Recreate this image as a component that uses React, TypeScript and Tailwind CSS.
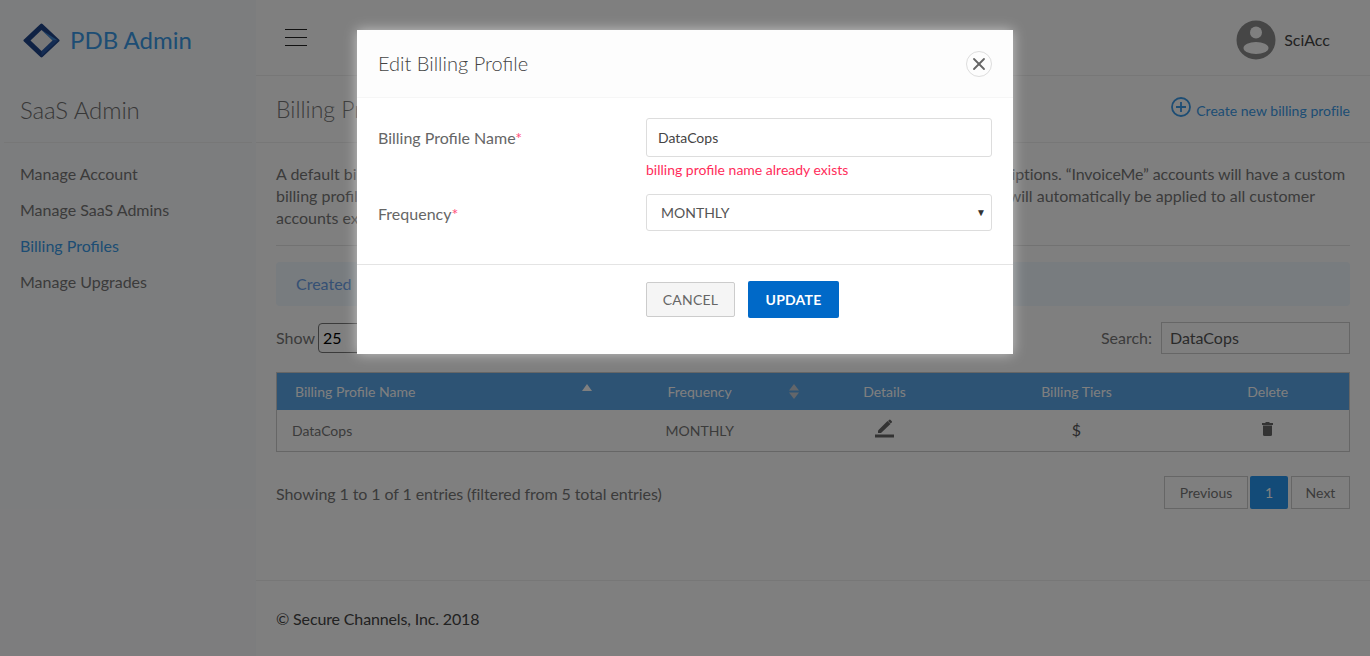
import React from 'react';
import { X, ChevronDown } from 'lucide-react';

const navItems = ['Manage Account', 'Manage SaaS Admins', 'Billing Profiles', 'Manage Upgrades'];

const Logo = () => (
    <svg width="37" height="35" viewBox="0 0 37 35">
        <path d="M18.5 2 L35 17.5 L18.5 33 L2 17.5 Z" fill="#1f4488" stroke="#1f4488" strokeWidth="3" strokeLinejoin="round" />
        <path d="M18.5 7 L35 17.5 L29.5 17.5 Z" fill="#3f86d0" />
        <path d="M35 17.5 L18.5 33 L18.5 28 L29.5 17.5 Z" fill="#2a5aa8" />
        <path d="M18.5 7 L29.5 17.5 L18.5 28 L7.5 17.5 Z" fill="#f0f0f0" />
    </svg>
);

const Avatar = () => (
    <svg width="40" height="40" viewBox="0 0 40 40">
        <circle cx="20" cy="20" r="19.5" fill="#8c8c8c" />
        <circle cx="20" cy="12.5" r="6" fill="#ffffff" />
        <ellipse cx="20" cy="28" rx="12.5" ry="6" fill="#ffffff" />
    </svg>
);

const PlusCircle = () => (
    <svg width="20" height="20" viewBox="0 0 20 20" fill="none" stroke="#3a9ae8" strokeWidth="1.8">
        <circle cx="10" cy="10" r="9" />
        <path d="M10 5v10M5 10h10" />
    </svg>
);

const SortArrows = () => (
    <svg width="10" height="15" viewBox="0 0 10 15" fill="#c6cdd4">
        <path d="M5 0 L10 6.5 H0 Z" />
        <path d="M5 15 L0 8.5 H10 Z" />
    </svg>
);

const EditIcon = () => (
    <svg width="19" height="19" viewBox="0 0 19 19" fill="#666666">
        <path d="M3 12.5 L12.5 3 L15.5 6 L6 15 L3 15 Z" transform="translate(0 -1)" />
        <path d="M13.5 2 L14.8 0.7 Q15.3 0.3 15.8 0.7 L17.3 2.2 Q17.7 2.7 17.3 3.2 L16 4.5 Z" transform="translate(-0.5 0)" />
        <rect x="0" y="15.5" width="19" height="3" />
    </svg>
);

const TrashIcon = () => (
    <svg width="11" height="14" viewBox="0 0 11 14" fill="#666666">
        <path d="M3.5 0 H7.5 V1 H11 V3 H0 V1 H3.5 Z" />
        <path d="M1 3.5 H10 V12.5 Q10 14 8.5 14 H2.5 Q1 14 1 12.5 Z" />
    </svg>
);

const App: React.FC = () => {
    return (
        <div className="relative h-[656px] w-[1370px] overflow-hidden bg-white text-[16px] text-[#777777] font-['Lato',sans-serif]">
            <div className="flex h-full">
                {/* Sidebar */}
                <aside className="h-full w-[256px] shrink-0 bg-[#f9fafc]">
                    <div className="flex h-[76px] items-center gap-[10px] pl-[23px] pt-[4px]">
                        <Logo />
                        <span className="text-[24px] text-[#3a9ae8]">PDB Admin</span>
                    </div>
                    <div className="ml-[4px] mr-[4px] flex h-[67px] items-center border-b border-[#eeeeee] pl-[16px] pt-[2px]">
                        <span className="text-[24px] font-light tracking-[-0.1px] text-[#707070]">SaaS Admin</span>
                    </div>
                    <nav className="flex flex-col gap-[14px] pl-[20px] pt-[20px]">
                        {navItems.map((item) => (
                            <a key={item} className={`h-[22px] leading-[22px] ${item === 'Billing Profiles' ? 'text-[#3a9ae8]' : 'text-[#777777]'}`}>
                                {item}
                            </a>
                        ))}
                    </nav>
                </aside>

                {/* Main */}
                <main className="flex h-full min-w-0 flex-1 flex-col">
                    <header className="flex h-[76px] shrink-0 items-center justify-between border-b border-[#eeeeee] pl-[29px] pr-[40px]">
                        <div className="flex w-[22px] flex-col gap-[7px]">
                            <span className="h-px w-full bg-[#222222]" />
                            <span className="h-px w-full bg-[#222222]" />
                            <span className="h-px w-full bg-[#222222]" />
                        </div>
                        <div className="mt-[4px] flex items-center gap-[8px]">
                            <Avatar />
                            <span className="text-[16px] text-[#444444]">SciAcc</span>
                        </div>
                    </header>

                    <div className="flex flex-1 flex-col pl-[20px] pr-[20px]">
                        <div className="-ml-[20px] -mr-[20px] flex h-[67px] shrink-0 items-center justify-between border-b border-[#eeeeee] pl-[20px] pr-[20px]">
                            <h1 className="text-[23px] font-light text-[#777777]">Billing Profiles</h1>
                            <a className="flex items-center gap-[5px] pt-[2px] text-[14px] tracking-[0.03px] text-[#3a9ae8]">
                                <span className="mb-[6px]"><PlusCircle /></span>
                                Create new billing profile
                            </a>
                        </div>

                        <div className="flex h-[103px] shrink-0 flex-col border-b border-[#e4e4e4] pt-[20px] leading-[22px]">
                            <div className="flex justify-between">
                                <span>A default billing profile is used for</span>
                                <span className="mr-[5px] tracking-[-0.1px]">subscriptions. “InvoiceMe” accounts will have a custom</span>
                            </div>
                            <div className="flex justify-between">
                                <span>billing profile assigned to them.</span>
                                <span className="mr-[35px]">will automatically be applied to all customer</span>
                            </div>
                            <div>accounts except those with a custom profile.</div>
                        </div>

                        <div className="mt-[16px] flex h-[44px] shrink-0 items-center rounded bg-[#f0f8ff] pl-[20px] text-[#6aa0e8]">
                            Created
                        </div>

                        <div className="mt-[16px] flex h-[32px] shrink-0 items-center justify-between">
                            <div className="flex items-center gap-[3px]">
                                Show
                                <div className="flex h-[30px] w-[70px] items-center justify-between rounded-[4px] border border-[#777777] px-[4px] text-black">
                                    25
                                    <ChevronDown size={12} />
                                </div>
                            </div>
                            <div className="flex items-center gap-[9px]">
                                Search:
                                <div className="flex h-[32px] w-[189px] items-center border border-[#cccccc] pl-[8px] text-[#555555]">DataCops</div>
                            </div>
                        </div>

                        <table className="mt-[18px] w-[1073px] table-fixed border border-[#cccccc] text-[14px]">
                            <colgroup>
                                <col className="w-[374px]" />
                                <col className="w-[152px]" />
                                <col className="w-[164px]" />
                                <col className="w-[220px]" />
                                <col className="w-[163px]" />
                            </colgroup>
                            <thead>
                                <tr className="h-[37px] bg-[#5aa6e8] font-normal text-white">
                                    <th className="pl-[18px] text-left font-normal">
                                        <div className="flex items-center justify-between pr-[59px]">
                                            Billing Profile Name
                                            <svg width="10" height="7" viewBox="0 0 10 7" fill="#ffffff" className="mb-[7px]"><path d="M5 0 L10 7 H0 Z" /></svg>
                                        </div>
                                    </th>
                                    <th className="pl-[17px] text-left font-normal">
                                        <div className="flex items-center justify-between pr-[4px]">
                                            Frequency
                                            <SortArrows />
                                        </div>
                                    </th>
                                    <th className="text-center font-normal">Details</th>
                                    <th className="text-center font-normal">Billing Tiers</th>
                                    <th className="text-center font-normal">Delete</th>
                                </tr>
                            </thead>
                            <tbody>
                                <tr className="h-[42px] text-[#777777]">
                                    <td className="pl-[15px]">DataCops</td>
                                    <td className="pl-[15px]">MONTHLY</td>
                                    <td>
                                        <div className="mb-[4px] flex justify-center"><EditIcon /></div>
                                    </td>
                                    <td className="text-center text-[16px] text-[#555555]">$</td>
                                    <td>
                                        <div className="mb-[3px] flex justify-center"><TrashIcon /></div>
                                    </td>
                                </tr>
                            </tbody>
                        </table>

                        <div className="mt-[24px] flex items-center justify-between">
                            <span className="mt-[2px] tracking-[-0.09px]">Showing 1 to 1 of 1 entries (filtered from 5 total entries)</span>
                            <div className="flex items-center gap-[2px] text-[14px]">
                                <button className="h-[33px] w-[84px] border border-[#cccccc]">Previous</button>
                                <button className="h-[33px] w-[38px] rounded-[2px] bg-[#2696f0] text-white">1</button>
                                <button className="ml-[1px] h-[33px] w-[59px] border border-[#cccccc]">Next</button>
                            </div>
                        </div>

                        <footer className="-ml-[20px] -mr-[20px] mt-auto flex h-[76px] shrink-0 items-center border-t border-[#eeeeee] pl-[20px] tracking-[-0.14px] text-[#444444]">
                            © Secure Channels, Inc. 2018
                        </footer>
                    </div>
                </main>
            </div>

            {/* Overlay and modal */}
            <div className="absolute inset-0 bg-black/50" />
            <div className="absolute left-[357px] top-[30px] flex h-[324px] w-[656px] flex-col bg-white text-[#666666] shadow-[0_0_12px_rgba(255,255,255,0.55)]">
                <div className="flex h-[68px] shrink-0 items-center justify-between border-b border-[#f6f6f6] bg-[#fdfdfd] pb-[2px] pl-[21px] pr-[21px]">
                    <span className="text-[20px] font-light text-[#444444]">Edit Billing Profile</span>
                    <span className="mt-[2px] flex h-[26px] w-[26px] items-center justify-center rounded-full border border-[#dddddd]">
                        <X size={20} strokeWidth={2.2} />
                    </span>
                </div>
                <div className="grid h-[167px] shrink-0 grid-cols-[268px_346px] content-start border-b border-[#e4e4e4] pl-[21px] pt-[20px] text-[16px]">
                    <label className="pt-[8px]">Billing Profile Name<span className="text-[#ff4f7b]">*</span></label>
                    <div className="flex flex-col">
                        <div className="flex h-[39px] items-center rounded-[3px] border border-[#dddddd] pl-[11px] text-[14px] text-[#444444]">DataCops</div>
                        <span className="mt-[3px] h-[34px] text-[14px] leading-[20px] text-[#ff2d5b]">billing profile name already exists</span>
                    </div>
                    <label className="pt-[8px]">Frequency<span className="text-[#ff4f7b]">*</span></label>
                    <div className="flex h-[37px] items-center justify-between rounded-[3px] border border-[#dddddd] pl-[14px] pr-[5px] text-[14px] text-[#555555]">
                        MONTHLY
                        <span className="text-[10px] text-[#333333]">▼</span>
                    </div>
                </div>
                <div className="flex flex-1 items-start gap-[13px] pl-[289px] pt-[16px]">
                    <button className="mt-[1px] h-[35px] w-[89px] rounded-[2px] border border-[#cccccc] bg-[#f5f5f5] text-[14px] tracking-[0.2px] text-[#666666]">CANCEL</button>
                    <button className="h-[37px] w-[91px] rounded-[2px] bg-[#0069c8] text-[14px] font-bold tracking-[0.2px] text-white">UPDATE</button>
                </div>
            </div>
        </div>
    );
};

export default App;
